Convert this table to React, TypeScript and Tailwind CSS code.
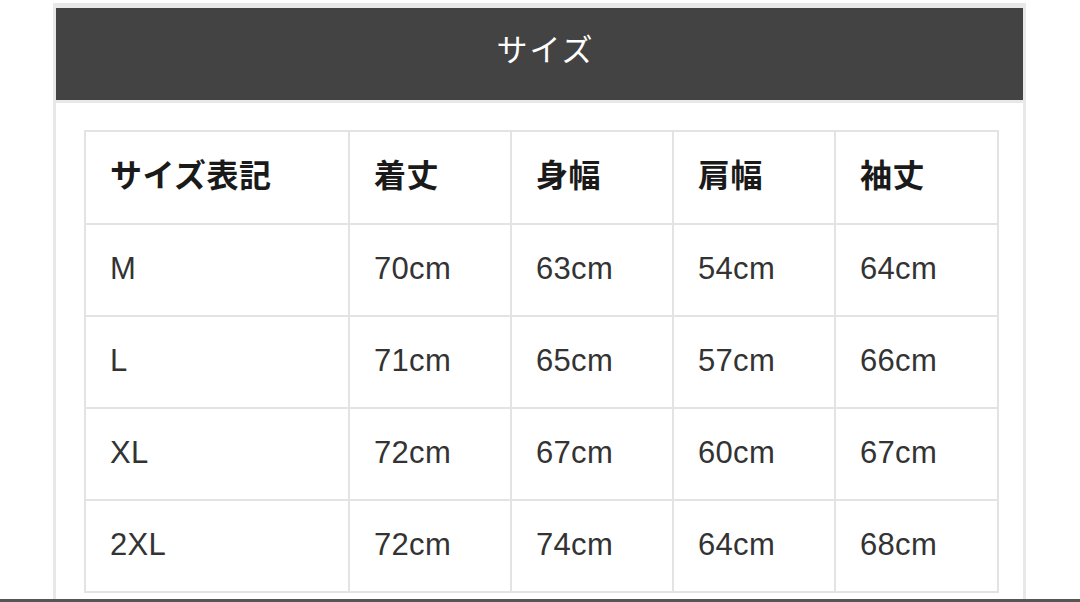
import React from 'react';

// サイズ表（商品詳細ページのサイズチャート）
const headers = ['サイズ表記', '着丈', '身幅', '肩幅', '袖丈'];

const rows: string[][] = [
  ['M', '70cm', '63cm', '54cm', '64cm'],
  ['L', '71cm', '65cm', '57cm', '66cm'],
  ['XL', '72cm', '67cm', '60cm', '67cm'],
  ['2XL', '72cm', '74cm', '64cm', '68cm'],
];

const colWidths = ['w-[264px]', 'w-[162px]', 'w-[162px]', 'w-[162px]', 'w-[163px]'];

const font = { fontFamily: '"Liberation Sans", "Noto Sans CJK JP", sans-serif' };

const App: React.FC = () => {
  return (
    <div className="w-[1080px] h-[602px] bg-white overflow-hidden flex flex-col" style={font}>
      <div className="flex-1 pt-[3px] pl-[53px]">
        <div className="w-[973px] h-full border-x-[3px] border-t-[5px] border-[#e8e8e8]">
          {/* ── Заголовок ── */}
          <div className="h-[92px] bg-[#434343] border-b-[3px] border-[#e8e8e8] box-content flex items-center justify-center">
            <span className="text-white text-[31px] tracking-[2px] pl-[12px] -mt-[6px]">サイズ</span>
          </div>

          {/* ── Таблица ── */}
          <div className="pl-[28px] pt-[27px]">
            <table className="w-[913px] table-fixed border-collapse">
              <colgroup>
                {colWidths.map((w, i) => (
                  <col key={i} className={w} />
                ))}
              </colgroup>
              <thead>
                <tr className="h-[93px]">
                  {headers.map((h) => (
                    <th
                      key={h}
                      className="border-2 border-[#e3e3e3] text-left font-bold text-[32px] tracking-[0.5px] text-[#1a1a1a] pl-[24px] pb-[3px]"
                    >
                      {h}
                    </th>
                  ))}
                </tr>
              </thead>
              <tbody>
                {rows.map((r) => (
                  <tr key={r[0]} className="h-[92px]">
                    {r.map((c, i) => (
                      <td
                        key={i}
                        className="border-2 border-[#e3e3e3] text-[31px] tracking-[0.3px] text-[#333] pl-[24px] pb-[2px]"
                      >
                        {c}
                      </td>
                    ))}
                  </tr>
                ))}
              </tbody>
            </table>
          </div>
        </div>
      </div>
      <div className="h-[3px] bg-[#555]" />
    </div>
  );
};

export default App;
